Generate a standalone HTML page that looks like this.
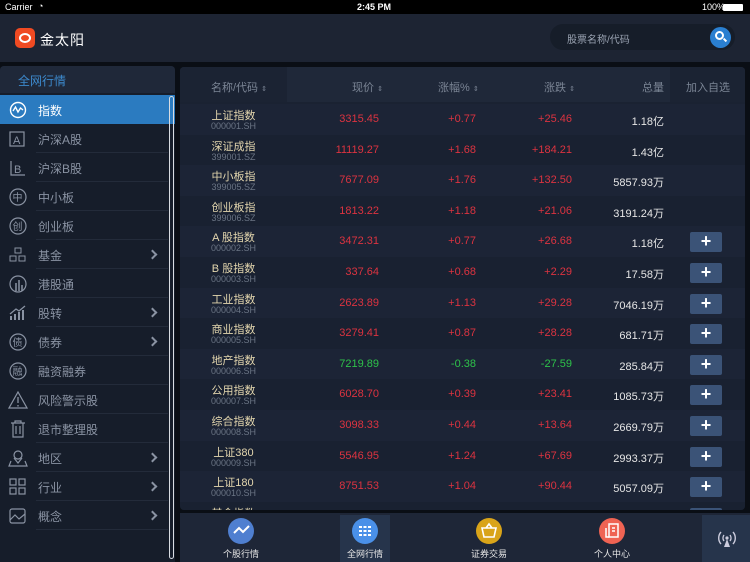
<!DOCTYPE html>
<html><head><meta charset="utf-8"><style>
*{margin:0;padding:0;box-sizing:border-box}
body{width:750px;height:562px;overflow:hidden;background:#0a0e15;font-family:"Liberation Sans","Noto Sans CJK SC",sans-serif;position:relative;color:#fff}
.abs{position:absolute}
#status{left:0;top:0;width:750px;height:14px;background:#000;font-size:9px;color:#fff}
#hdr{left:0;top:14px;width:750px;height:48px;background:#1d2433}
#side{left:0;top:66px;width:175px;height:496px;background:#161d2a;border-radius:4px 4px 0 0;overflow:hidden}
.si{position:absolute;left:0;width:168px;height:29px;font-size:12px;color:#8a93a3}
.si .t{position:absolute;left:38px;top:7px}
.si .ln{position:absolute;left:36px;right:0;bottom:0;height:1px;background:#232b3a}
.si svg{position:absolute;left:8px;top:6px}
.si .ar{position:absolute;left:149px;top:11px;width:7px;height:7px;border-right:2px solid #8a93a3;border-top:2px solid #8a93a3;transform:rotate(45deg)}
#tbl{left:180px;top:67px;width:565px;height:443px;background:#1a2232;border-radius:4px;overflow:hidden}
.row{position:absolute;left:0;width:565px;height:30.6px}
.row div{position:absolute;font-size:11px}
.nm{left:0;width:107px;text-align:center;top:3px;color:#e3d6ae;font-size:11px}
.cd{left:0;width:107px;text-align:center;top:17px;color:#6b7585;font-size:9px!important}
.c1{right:366px;top:9px}.c2{right:269px;top:9px}.c3{right:173px;top:9px}.c4{right:81px;top:9px;color:#e6e6e6}
.r{color:#dc3340}.g{color:#2ec24a}.w{color:#e6e6e6}
.pb{left:510px;top:6px;width:32px;height:20px;background:#3b5377;border-radius:2px;color:#fff;text-align:center;font-size:18px!important;line-height:19px;font-weight:bold}
.th{position:absolute;top:12px;font-size:11px;color:#7b8595}
.th small{font-size:7px}
#tab{left:180px;top:513px;width:570px;height:49px;background:#1e2637}
.ti{position:absolute;top:5px;width:60px;text-align:center;font-size:9px;color:#e6e6e6}
.ti .c{width:26px;height:26px;border-radius:50%;margin:0 auto 3px}
</style></head><body>
<div id="status" class="abs"><span class="abs" style="left:5px;top:2px">Carrier</span><span class="abs" style="left:38px;top:1px;font-size:9px">&#x25D4;</span><span class="abs" style="left:357px;top:2px;font-weight:bold">2:45 PM</span><span class="abs" style="left:702px;top:2px">100%</span><span class="abs" style="left:723px;top:4px;width:20px;height:7px;background:#fff;border-radius:1px"></span></div>
<div id="hdr" class="abs">
<div class="abs" style="left:15px;top:14px;width:20px;height:20px;background:#f04a22;border-radius:5px"></div>
<div class="abs" style="left:19px;top:19px;width:12px;height:10px;border:2px solid #fff;border-radius:50%"></div>
<div class="abs" style="left:40px;top:16px;font-size:14px;color:#fff;letter-spacing:1px">金太阳</div>
<div class="abs" style="left:550px;top:10px;width:185px;height:26px;background:#161d29;border-radius:13px"></div>
<div class="abs" style="left:567px;top:17px;font-size:10px;color:#9aa3b2">股票名称/代码</div>
<div class="abs" style="left:710px;top:13px;width:21px;height:21px;background:#2a7fd0;border-radius:50%"></div>
<div class="abs" style="left:715px;top:17px;width:9px;height:9px;border:2px solid #fff;border-radius:50%"></div>
<div class="abs" style="left:723px;top:25px;width:4px;height:2px;background:#fff;transform:rotate(45deg)"></div>
</div>
<div id="side" class="abs">
<div class="abs" style="left:0;top:0;width:175px;height:27px;background:#1f2839"></div>
<div class="abs" style="left:18px;top:6px;font-size:12px;color:#3c89cc">全网行情</div>
<div class="abs" style="left:0;top:29px;width:175px;height:29px;background:#2b7bc0"></div>
<div class="si" style="top:29px;color:#fff"><svg width="20" height="18"><circle cx="10" cy="9" r="7.5" fill="none" stroke="#fff" stroke-width="1.4"/><path d="M5 10 L7.5 6 L10 11 L12.5 7 L15 9" fill="none" stroke="#fff" stroke-width="1.4"/></svg><span class="t" style="color:#fff">指数</span></div>
<div class="si" style="top:58px"><svg width="20" height="18"><rect x="2" y="2" width="14" height="14" fill="none" stroke="#8a93a3" stroke-width="1.2"/><text x="5" y="14" font-size="11" fill="#8a93a3">A</text></svg><span class="t">沪深A股</span><span class="ln"></span></div>
<div class="si" style="top:87px"><svg width="20" height="18"><path d="M3 2 V16 H17" fill="none" stroke="#8a93a3" stroke-width="1.2"/><text x="6" y="14" font-size="11" fill="#8a93a3">B</text></svg><span class="t">沪深B股</span><span class="ln"></span></div>
<div class="si" style="top:116px"><svg width="20" height="18"><circle cx="10" cy="9" r="8" fill="none" stroke="#8a93a3" stroke-width="1.2"/><text x="4.5" y="13" font-size="10" fill="#8a93a3">中</text></svg><span class="t">中小板</span><span class="ln"></span></div>
<div class="si" style="top:145px"><svg width="20" height="18"><circle cx="10" cy="9" r="8" fill="none" stroke="#8a93a3" stroke-width="1.2"/><text x="4.5" y="13" font-size="10" fill="#8a93a3">创</text></svg><span class="t">创业板</span><span class="ln"></span></div>
<div class="si" style="top:174px"><svg width="20" height="18"><rect x="7" y="2" width="6" height="5" fill="none" stroke="#8a93a3"/><rect x="2" y="10" width="6" height="5" fill="none" stroke="#8a93a3"/><rect x="11" y="10" width="6" height="5" fill="none" stroke="#8a93a3"/></svg><span class="t">基金</span><span class="ar"></span><span class="ln"></span></div>
<div class="si" style="top:203px"><svg width="20" height="18"><circle cx="10" cy="9" r="8" fill="none" stroke="#8a93a3" stroke-width="1.2"/><path d="M8 16 V8 M11 16 V5 M14 16 V10" stroke="#8a93a3" stroke-width="1.5"/></svg><span class="t">港股通</span><span class="ln"></span></div>
<div class="si" style="top:232px"><svg width="20" height="18"><path d="M3 16 V12 M7 16 V10 M11 16 V8 M15 16 V6" stroke="#8a93a3" stroke-width="2"/><path d="M2 10 L8 5 L11 7 L17 2" fill="none" stroke="#8a93a3" stroke-width="1.3"/></svg><span class="t">股转</span><span class="ar"></span><span class="ln"></span></div>
<div class="si" style="top:261px"><svg width="20" height="18"><circle cx="10" cy="9" r="8" fill="none" stroke="#8a93a3" stroke-width="1.2"/><text x="4.5" y="13" font-size="10" fill="#8a93a3">债</text></svg><span class="t">债券</span><span class="ar"></span><span class="ln"></span></div>
<div class="si" style="top:290px"><svg width="20" height="18"><circle cx="10" cy="9" r="8" fill="none" stroke="#8a93a3" stroke-width="1.2"/><text x="4.5" y="13" font-size="10" fill="#8a93a3">融</text></svg><span class="t">融资融券</span><span class="ln"></span></div>
<div class="si" style="top:319px"><svg width="20" height="18"><path d="M10 1 L19 17 H1 Z" fill="none" stroke="#8a93a3" stroke-width="1.2"/><path d="M10 6 V12 M10 14 V15.5" stroke="#8a93a3" stroke-width="1.3"/></svg><span class="t">风险警示股</span><span class="ln"></span></div>
<div class="si" style="top:348px"><svg width="20" height="18"><path d="M3 3 H17 M7 3 V1 H13 V3 M5 3 V17 H15 V3 M8 6 V14 M12 6 V14" fill="none" stroke="#8a93a3" stroke-width="1.2"/></svg><span class="t">退市整理股</span><span class="ln"></span></div>
<div class="si" style="top:377px"><svg width="20" height="18"><circle cx="10" cy="6" r="4" fill="none" stroke="#8a93a3" stroke-width="1.2"/><path d="M6 9 L10 14 L14 9 M3 12 L1 17 H19 L17 12" fill="none" stroke="#8a93a3" stroke-width="1.2"/></svg><span class="t">地区</span><span class="ar"></span><span class="ln"></span></div>
<div class="si" style="top:406px"><svg width="20" height="18"><rect x="2" y="1" width="6" height="6" fill="none" stroke="#8a93a3" stroke-width="1.2"/><rect x="11" y="1" width="6" height="6" fill="none" stroke="#8a93a3" stroke-width="1.2"/><rect x="2" y="10" width="6" height="6" fill="none" stroke="#8a93a3" stroke-width="1.2"/><rect x="11" y="10" width="6" height="6" fill="none" stroke="#8a93a3" stroke-width="1.2"/></svg><span class="t">行业</span><span class="ar"></span><span class="ln"></span></div>
<div class="si" style="top:435px"><svg width="20" height="18"><rect x="2" y="2" width="15" height="14" rx="2" fill="none" stroke="#8a93a3" stroke-width="1.2"/><path d="M2 13 L7 8 L11 12 L17 7" fill="none" stroke="#8a93a3" stroke-width="1.2"/></svg><span class="t">概念</span><span class="ar"></span><span class="ln"></span></div>
<div class="abs" style="left:169px;top:30px;width:5px;height:463px;border:1px solid #d8dce2;border-radius:3px"></div>
</div>
<div id="tbl" class="abs">
<div class="abs" style="left:0;top:0;width:565px;height:35px;background:#1f2839"></div>
<div class="abs" style="left:0;top:0;width:107px;height:35px;background:#1b2333"></div>
<div class="abs" style="left:490px;top:0;width:75px;height:35px;background:#1b2333"></div>
<div class="th" style="left:31px">名称/代码 <small>⇕</small></div>
<div class="th" style="left:172px">现价 <small>⇕</small></div>
<div class="th" style="left:258px">涨幅% <small>⇕</small></div>
<div class="th" style="left:364px">涨跌 <small>⇕</small></div>
<div class="th" style="left:462px">总量</div>
<div class="th" style="left:506px">加入自选</div>
<div class="row" style="top:37px;background:#1c2436"><div class="nm">上证指数</div><div class="cd">000001.SH</div><div class="c1 r">3315.45</div><div class="c2 r">+0.77</div><div class="c3 r">+25.46</div><div class="c4">1.18亿</div></div>
<div class="row" style="top:67.6px;background:#192131"><div class="nm">深证成指</div><div class="cd">399001.SZ</div><div class="c1 r">11119.27</div><div class="c2 r">+1.68</div><div class="c3 r">+184.21</div><div class="c4">1.43亿</div></div>
<div class="row" style="top:98.2px;background:#1c2436"><div class="nm">中小板指</div><div class="cd">399005.SZ</div><div class="c1 r">7677.09</div><div class="c2 r">+1.76</div><div class="c3 r">+132.50</div><div class="c4">5857.93万</div></div>
<div class="row" style="top:128.8px;background:#192131"><div class="nm">创业板指</div><div class="cd">399006.SZ</div><div class="c1 r">1813.22</div><div class="c2 r">+1.18</div><div class="c3 r">+21.06</div><div class="c4">3191.24万</div></div>
<div class="row" style="top:159.4px;background:#1c2436"><div class="nm">A 股指数</div><div class="cd">000002.SH</div><div class="c1 r">3472.31</div><div class="c2 r">+0.77</div><div class="c3 r">+26.68</div><div class="c4">1.18亿</div><div class="pb">+</div></div>
<div class="row" style="top:190px;background:#192131"><div class="nm">B 股指数</div><div class="cd">000003.SH</div><div class="c1 r">337.64</div><div class="c2 r">+0.68</div><div class="c3 r">+2.29</div><div class="c4">17.58万</div><div class="pb">+</div></div>
<div class="row" style="top:220.6px;background:#1c2436"><div class="nm">工业指数</div><div class="cd">000004.SH</div><div class="c1 r">2623.89</div><div class="c2 r">+1.13</div><div class="c3 r">+29.28</div><div class="c4">7046.19万</div><div class="pb">+</div></div>
<div class="row" style="top:251.2px;background:#192131"><div class="nm">商业指数</div><div class="cd">000005.SH</div><div class="c1 r">3279.41</div><div class="c2 r">+0.87</div><div class="c3 r">+28.28</div><div class="c4">681.71万</div><div class="pb">+</div></div>
<div class="row" style="top:281.8px;background:#1c2436"><div class="nm">地产指数</div><div class="cd">000006.SH</div><div class="c1 g">7219.89</div><div class="c2 g">-0.38</div><div class="c3 g">-27.59</div><div class="c4">285.84万</div><div class="pb">+</div></div>
<div class="row" style="top:312.4px;background:#192131"><div class="nm">公用指数</div><div class="cd">000007.SH</div><div class="c1 r">6028.70</div><div class="c2 r">+0.39</div><div class="c3 r">+23.41</div><div class="c4">1085.73万</div><div class="pb">+</div></div>
<div class="row" style="top:343px;background:#1c2436"><div class="nm">综合指数</div><div class="cd">000008.SH</div><div class="c1 r">3098.33</div><div class="c2 r">+0.44</div><div class="c3 r">+13.64</div><div class="c4">2669.79万</div><div class="pb">+</div></div>
<div class="row" style="top:373.6px;background:#192131"><div class="nm">上证380</div><div class="cd">000009.SH</div><div class="c1 r">5546.95</div><div class="c2 r">+1.24</div><div class="c3 r">+67.69</div><div class="c4">2993.37万</div><div class="pb">+</div></div>
<div class="row" style="top:404.2px;background:#1c2436"><div class="nm">上证180</div><div class="cd">000010.SH</div><div class="c1 r">8751.53</div><div class="c2 r">+1.04</div><div class="c3 r">+90.44</div><div class="c4">5057.09万</div><div class="pb">+</div></div>
<div class="row" style="top:434.8px;background:#192131"><div class="nm">基金指数</div><div class="pb">+</div></div>
</div>
<div id="tab" class="abs">
<div class="abs" style="left:160px;top:2px;width:50px;height:47px;background:#26344b"></div>
<div class="abs" style="left:522px;top:2px;width:48px;height:47px;background:#26344b"></div>
<div class="ti" style="left:31px"><div class="c" style="background:#4f7fd0"><svg width="26" height="26"><path d="M6 15 L11 10 L15 14 L21 8" fill="none" stroke="#fff" stroke-width="2"/></svg></div>个股行情</div>
<div class="ti" style="left:155px"><div class="c" style="background:#4a90e8"><svg width="26" height="26"><path d="M7 9 H19 M7 13 H19 M7 17 H19" stroke="#fff" stroke-width="2" stroke-dasharray="3 1.5"/></svg></div>全网行情</div>
<div class="ti" style="left:279px"><div class="c" style="background:#d9a419"><svg width="26" height="26"><path d="M6 10 H20 L18 19 H8 Z M10 10 L13 6 L16 10" fill="none" stroke="#fff" stroke-width="1.6"/></svg></div>证券交易</div>
<div class="ti" style="left:402px"><div class="c" style="background:#ef6353"><svg width="26" height="26"><rect x="10" y="6" width="9" height="13" fill="none" stroke="#fff" stroke-width="1.5"/><path d="M7 10 V19 H10 M13 10 H16 M13 13 H16" fill="none" stroke="#fff" stroke-width="1.5"/></svg></div>个人中心</div>
<svg class="abs" style="left:535px;top:16px" width="24" height="20"><path d="M6 3 A9 9 0 0 0 6 15 M18 3 A9 9 0 0 1 18 15 M9 6 A5 5 0 0 0 9 12 M15 6 A5 5 0 0 1 15 12" fill="none" stroke="#ccd" stroke-width="1.4"/><circle cx="12" cy="9" r="1.6" fill="#ccd"/><path d="M12 10 L9 18 H15 Z" fill="#ccd"/></svg>
</div>
</body></html>
